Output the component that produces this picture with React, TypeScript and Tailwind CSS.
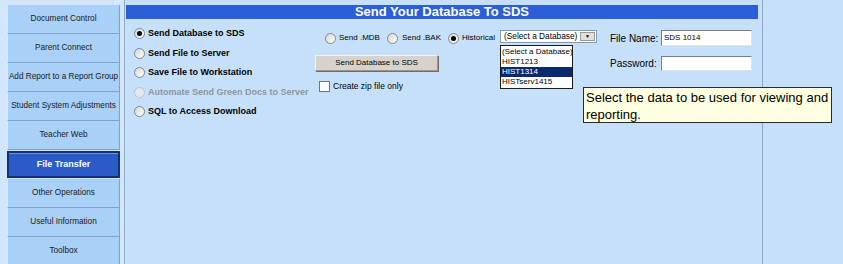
import React from 'react';

const navItems = [
  'Document Control',
  'Parent Connect',
  'Add Report to a Report Group',
  'Student System Adjustments',
  'Teacher Web',
  'File Transfer',
  'Other Operations',
  'Useful Information',
  'Toolbox',
];

const transferOptions = [
  { label: 'Send Database to SDS', checked: true },
  { label: 'Send File to Server' },
  { label: 'Save File to Workstation' },
  { label: 'Automate Send Green Docs to Server', disabled: true },
  { label: 'SQL to Access Download' },
];

const databases = ['(Select a Database)', 'HIST1213', 'HIST1314', 'HISTserv1415'];

// XP style radio circle
const Radio = ({ checked = false, disabled = false }: { checked?: boolean; disabled?: boolean }) => (
  <span
    className={`flex h-[11px] w-[11px] shrink-0 items-center justify-center rounded-full border ${
      disabled
        ? 'border-[#b8c4cf] bg-[#e4e8ec]'
        : 'border-[#7b8a99] bg-gradient-to-br from-[#d6d6d0] to-white'
    }`}
  >
    {checked && <span className="h-[5px] w-[5px] rounded-full bg-black" />}
  </span>
);

const App: React.FC = () => {
  return (
    <div className="flex h-[264px] w-[843px] overflow-hidden bg-[#c6e0fa] font-['Liberation_Sans',Arial,sans-serif] text-black">
      {/* Left navigation */}
      <nav className="flex w-[124px] shrink-0 flex-col bg-[#d3e6fa] pl-[7px] pr-[4px] pt-[5px]">
        {navItems.map((item) => {
          const active = item === 'File Transfer';
          return active ? (
            <div
              key={item}
              className="my-[1px] flex h-[27px] shrink-0 items-center justify-center border-2 border-[#14307a] bg-[#2a5bc6] text-[9px] font-bold text-white shadow-[inset_0_1px_0_#6b95e2]"
            >
              {item}
            </div>
          ) : (
            <div
              key={item}
              className="flex h-[29px] shrink-0 items-center justify-center whitespace-nowrap border-b border-l border-r border-[#7fa3cc] border-l-[#d8ebfc] bg-[#a9d0f6] text-[8.2px] text-[#1a1a1a]"
            >
              {item}
            </div>
          );
        })}
      </nav>

      {/* Main panel */}
      <main className="relative w-[639px] shrink-0 border-x border-[#8ea9c6]">
        <div className="ml-[1px] mr-[4px] mt-[5px] h-[14px] bg-[#2c5fd7] text-center text-[13px] font-bold leading-[14px] text-white">
          Send Your Database To SDS
        </div>

        <div className="flex pt-[5px]">
          {/* Transfer type */}
          <div className="w-[190px] shrink-0 pl-[9px]">
            {transferOptions.map((opt) => (
              <div key={opt.label} className="flex h-[19.5px] items-center gap-[3px]">
                <Radio checked={opt.checked} disabled={opt.disabled} />
                <span
                  className={`whitespace-nowrap text-[9px] font-bold ${
                    opt.disabled ? 'text-[#8e959c]' : 'text-black'
                  }`}
                >
                  {opt.label}
                </span>
              </div>
            ))}
          </div>

          {/* Send options */}
          <div className="w-[185px] shrink-0">
            <div className="mt-[7px] flex h-[14px] items-center whitespace-nowrap text-[8px]">
              <span className="ml-[10px]"><Radio /></span>
              <span className="ml-[3px]">Send .MDB</span>
              <span className="ml-[7px]"><Radio /></span>
              <span className="ml-[4px]">Send .BAK</span>
              <span className="ml-[7px]"><Radio checked /></span>
              <span className="ml-[3px]">Historical</span>
            </div>
            <button className="mt-[10px] flex h-[16px] w-[123px] items-center justify-center border border-[#9a978f] border-l-[#f4f3ef] border-t-[#f4f3ef] bg-[#d6d3cc] text-[8px] text-black shadow-[1px_1px_0_#6f6d68]">
              Send Database to SDS
            </button>
            <div className="ml-[4px] mt-[9px] flex items-center gap-[3px]">
              <span className="h-[11px] w-[11px] border border-[#6d7780] bg-white" />
              <span className="text-[8.5px]">Create zip file only</span>
            </div>
          </div>

          {/* Database select */}
          <div className="relative w-[97px] shrink-0 pt-[6px]">
            <div className="flex h-[13px] items-center justify-between border border-[#7f9db9] bg-white pl-[3px] text-[8.3px]">
              <span className="whitespace-nowrap">(Select a Database)</span>
              <span className="mr-[1px] flex h-[9px] w-[15px] items-center justify-center border border-[#9c9a94] bg-[#e2e0da] text-[5px] leading-none">
                ▼
              </span>
            </div>
            <ul className="absolute left-0 top-[21px] w-[73px] border border-[#1b1b1b] bg-white py-[1px] text-[8px]">
              {databases.map((db) => (
                <li
                  key={db}
                  className={`h-[10px] whitespace-nowrap pl-[1px] leading-[10px] ${
                    db === 'HIST1314' ? 'bg-[#0b2a6e] text-white' : 'text-black'
                  }`}
                >
                  {db}
                </li>
              ))}
            </ul>
          </div>

          {/* File name / password */}
          <div className="ml-[13px] w-[142px] shrink-0 text-[10px]">
            <div className="mt-[6px] flex h-[16px] items-center justify-between">
              <span>File Name:</span>
              <div className="flex h-[16px] w-[91px] items-center border border-[#7d7d7d] border-b-[#e2e2e2] border-r-[#e2e2e2] bg-white pl-[2px] text-[8px]">
                SDS 1014
              </div>
            </div>
            <div className="mt-[10px] flex h-[15px] items-center justify-between">
              <span>Password:</span>
              <div className="h-[15px] w-[91px] border border-[#7d7d7d] border-b-[#e2e2e2] border-r-[#e2e2e2] bg-white" />
            </div>
          </div>
        </div>

        {/* Tooltip */}
        <div className="absolute left-[458px] top-[87px] z-10 h-[36px] w-[249px] border border-[#2b2b2b] bg-[#ffffe1] pl-[2px] pt-[1px] text-[13px] leading-[17px] text-black">
          Select the data to be used for viewing and reporting.
        </div>
      </main>

      <div className="flex-1" />
    </div>
  );
};

export default App;
